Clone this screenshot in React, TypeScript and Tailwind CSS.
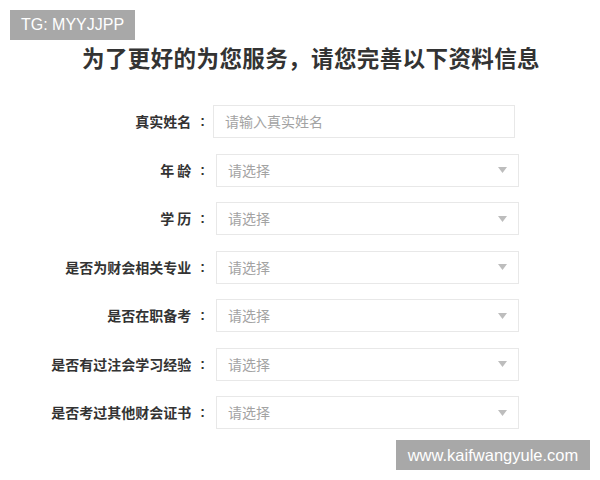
// Info form screenshot — title, seven labelled fields, two watermark tags

const fields = [
  { label: "真实姓名", placeholder: "请输入真实姓名", select: false },
  { label: "年 龄", placeholder: "请选择", select: true },
  { label: "学 历", placeholder: "请选择", select: true },
  { label: "是否为财会相关专业", placeholder: "请选择", select: true },
  { label: "是否在职备考", placeholder: "请选择", select: true },
  { label: "是否有过注会学习经验", placeholder: "请选择", select: true },
  { label: "是否考过其他财会证书", placeholder: "请选择", select: true },
];

function Arrow() {
  return (
    <svg width="9" height="6" viewBox="0 0 9 6" className="shrink-0">
      <path d="M0 0h9L4.5 6z" fill="#bdbdbd" />
    </svg>
  );
}

export default function App() {
  return (
    <div
      className="relative w-[600px] h-[480px] bg-white overflow-hidden"
      style={{ fontFamily: '"Noto Sans CJK SC", "Noto Sans", sans-serif' }}
    >
      {/* top-left watermark */}
      <div className="absolute left-[10px] top-[10px] w-[125px] h-[30px] bg-[#a8a8a8] flex items-center justify-center text-white text-[16px] font-['Liberation_Sans',sans-serif]">
        TG: MYYJJPP
      </div>

      <h1 className="pt-[41px] pl-[82px] text-[22.5px] leading-[32px] font-bold text-[#333] tracking-[0.4px]">
        为了更好的为您服务，请您完善以下资料信息
      </h1>

      <div className="mt-[32px] flex flex-col gap-[15.5px]">
        {fields.map((f, i) => (
          <div key={f.label} className="flex items-center h-[33px]">
            <div className="w-[206px] flex justify-end items-center text-[14px] font-bold text-[#333] whitespace-nowrap">
              <span>{f.label}</span>
              <span className="ml-[9px] mr-[1px] font-['Liberation_Sans',sans-serif]">:</span>
            </div>
            <div
              className={
                i === 0
                  ? "ml-[7px] w-[302px] h-[33px] border border-[#e8e8e8] flex items-center px-[11px]"
                  : "ml-[10px] w-[303px] h-[33px] border border-[#e8e8e8] flex items-center justify-between pl-[11px] pr-[11px]"
              }
            >
              <span className="text-[14px] text-[#a3a3a3]">{f.placeholder}</span>
              {f.select && <Arrow />}
            </div>
          </div>
        ))}
      </div>

      {/* bottom-right watermark */}
      <div className="absolute left-[396px] top-[440px] w-[194px] h-[30px] bg-[#a8a8a8] flex items-center justify-center text-white text-[16.5px] font-['Liberation_Sans',sans-serif]">
        www.kaifwangyule.com
      </div>
    </div>
  );
}
